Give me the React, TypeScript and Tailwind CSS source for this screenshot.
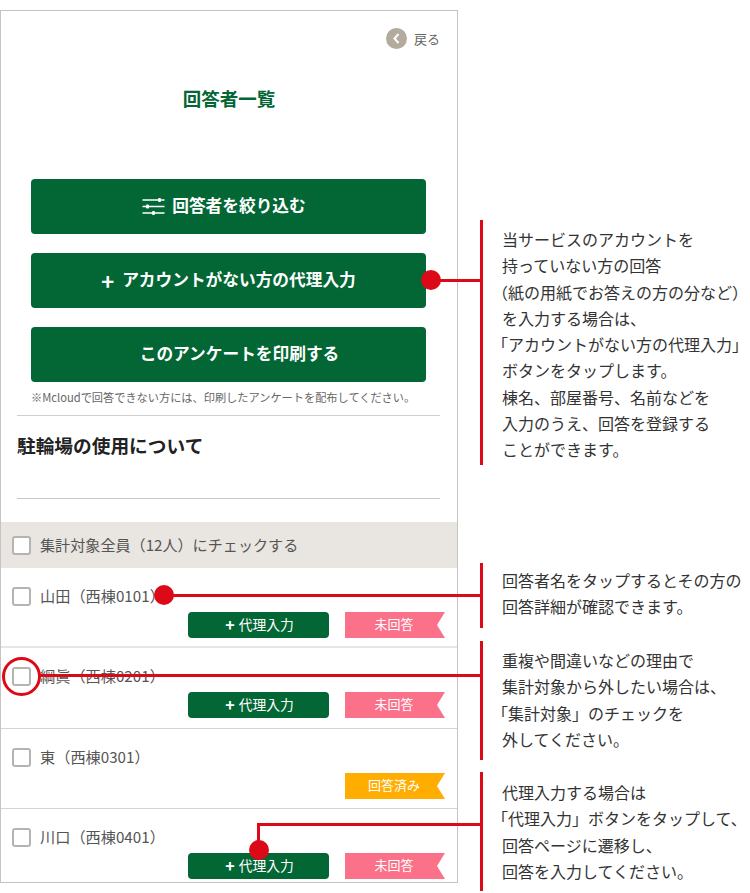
const Checkbox = () => (
  <span className="block w-[19px] h-[19px] shrink-0 rounded-[3px] border-2 border-[#b4b4b4] bg-white" />
);

const ProxyButton = () => (
  <button className="w-[141px] h-[26px] rounded-[4px] bg-[#036635] text-white text-[13.8px] flex items-center justify-center gap-[4px] pb-[2px] pl-[2px]">
    <span className="font-bold text-[16px] leading-none">+</span>
    <span>代理入力</span>
  </button>
);

const Tag = ({ label, color }: { label: string; color: string }) => (
  <span
    className={`w-[100px] h-[26px] flex items-center justify-center text-white text-[13px] pr-[2px] pb-[2px] [clip-path:polygon(0_0,100%_0,92%_50%,100%_100%,0_100%)] ${color}`}
  >
    {label}
  </span>
);

const Row = ({
  name,
  tag,
  color,
  proxy = true,
  height = "h-[80px]",
  border = "border-b border-[#d4d4d4]",
}: {
  name: string;
  tag: string;
  color: string;
  proxy?: boolean;
  height?: string;
  border?: string;
}) => (
  <div className={`pt-[18px] ${height} ${border}`}>
    <div className="flex items-center h-[20px] pl-[11px] gap-[9px] text-[15.2px] text-[#555]">
      <Checkbox />
      <span className="-mt-[2px]">{name}</span>
    </div>
    <div className="mt-[6px] h-[26px] flex justify-end items-center gap-[16px] pr-[12px]">
      {proxy && <ProxyButton />}
      <Tag label={tag} color={color} />
    </div>
  </div>
);

const MainButton = ({ children, className = "" }: { children: React.ReactNode; className?: string }) => (
  <button className={`w-[395px] h-[55px] rounded-[4px] bg-[#036635] text-white font-bold text-[16.7px] flex items-center justify-center pb-[2px] ${className}`}>
    {children}
  </button>
);

const SlidersIcon = () => (
  <svg width="23" height="19" viewBox="0 0 23 19" className="mr-[7px] mt-[2px]">
    <g stroke="#fff" strokeWidth="1.6" fill="none">
      <path d="M0.5 3h22M0.5 9.5h22M0.5 16h22" />
    </g>
    <g fill="#fff">
      <rect x="16" y="1" width="3" height="4" rx="1" />
      <rect x="4" y="7.5" width="3" height="4" rx="1" />
      <rect x="10" y="14" width="3" height="4" rx="1" />
    </g>
  </svg>
);

const Callout = ({
  className,
  lines,
}: {
  className: string;
  lines: { text: string; hang?: boolean }[];
}) => (
  <div className={`border-l-[3px] border-[#dc0a18] pl-[19px] text-[16px] leading-[26.25px] text-[#333] whitespace-nowrap ${className}`}>
    {lines.map((l) => (
      <div key={l.text} className={l.hang ? "-ml-[10px]" : ""}>
        {l.text}
      </div>
    ))}
  </div>
);

export default function App() {
  return (
    <div className="relative w-[750px] h-[893px] overflow-hidden bg-white flex items-start font-['Noto_Sans_CJK_JP','Noto_Sans',sans-serif]">
      <div className="w-[458px] h-[873px] mt-[10px] border border-[#c4c4c4] shrink-0 overflow-hidden">
        <div className="flex justify-end items-center gap-[7px] pr-[17px] pt-[17px] text-[13px] text-[#666]">
          <span className="w-[21px] h-[21px] rounded-full bg-[#b3ab9d] flex items-center justify-center">
            <svg width="9" height="11" viewBox="0 0 9 11" fill="none" stroke="#fff" strokeWidth="2">
              <path d="M6.5 1 2.5 5.5 6.5 10" />
            </svg>
          </span>
          <span>戻る</span>
        </div>
        <h1 className="mt-[36px] text-center text-[18.5px] font-bold text-[#036635] leading-[26px]">回答者一覧</h1>
        <div className="mt-[68px] flex flex-col gap-[19px] items-start pl-[30px]">
          <MainButton className="pr-[9px]">
            <SlidersIcon />
            回答者を絞り込む
          </MainButton>
          <MainButton>
            <span className="mr-[8px] text-[22px] leading-none font-bold">+</span>
            アカウントがない方の代理入力
          </MainButton>
          <MainButton className="pl-[22px]">このアンケートを印刷する</MainButton>
        </div>
        <p className="mt-[7px] pl-[30px] text-[11.2px] leading-[16px] text-[#666] whitespace-nowrap">
          ※Mcloudで回答できない方には、印刷したアンケートを配布してください。
        </p>
        <div className="mt-[10px] ml-[16px] mr-[17px] border-t border-[#d0d0d0] h-[83px]">
          <h2 className="pt-[15px] text-[18.7px] font-bold leading-[28px] text-[#222]">駐輪場の使用について</h2>
        </div>
        <div className="ml-[16px] mr-[17px] border-t border-[#c8c8c8]" />
        <div className="mt-[23px] h-[46px] bg-[#e9e5e0] flex items-center pl-[11px] gap-[9px] text-[15.1px] text-[#555]">
          <Checkbox />
          <span className="-mt-[2px]">集計対象全員（12人）にチェックする</span>
        </div>
        <Row name="山田（西棟0101）" tag="未回答" color="bg-[#fb718a]" border="border-b-2 border-[#e6e6e6]" />
        <Row name="綱眞（西棟0201）" tag="未回答" color="bg-[#fb718a]" height="h-[81px]" />
        <Row name="東（西棟0301）" tag="回答済み" color="bg-[#ffad00]" proxy={false} />
        <Row name="川口（西棟0401）" tag="未回答" color="bg-[#fb718a]" border="" />
      </div>

      <div className="ml-[22px] pt-[220px] flex flex-col">
        <Callout
          className="h-[245px] pt-[6px]"
          lines={[
            { text: "当サービスのアカウントを" },
            { text: "持っていない方の回答" },
            { text: "（紙の用紙でお答えの方の分など）", hang: true },
            { text: "を入力する場合は、" },
            { text: "「アカウントがない方の代理入力」", hang: true },
            { text: "ボタンをタップします。" },
            { text: "棟名、部屋番号、名前などを" },
            { text: "入力のうえ、回答を登録する" },
            { text: "ことができます。" },
          ]}
        />
        <Callout
          className="mt-[98px] h-[65px] pt-[4px]"
          lines={[{ text: "回答者名をタップするとその方の" }, { text: "回答詳細が確認できます。" }]}
        />
        <Callout
          className="mt-[13px] h-[119px] pt-[6px]"
          lines={[
            { text: "重複や間違いなどの理由で" },
            { text: "集計対象から外したい場合は、" },
            { text: "「集計対象」のチェックを", hang: true },
            { text: "外してください。" },
          ]}
        />
        <Callout
          className="mt-[12px] h-[119px] pt-[7px]"
          lines={[
            { text: "代理入力する場合は" },
            { text: "「代理入力」ボタンをタップして、", hang: true },
            { text: "回答ページに遷移し、" },
            { text: "回答を入力してください。" },
          ]}
        />
      </div>

      {/* connectors lying over the panel */}
      <span className="absolute left-[421px] top-[270px] w-[20px] h-[20px] rounded-full bg-[#dc0a18]" />
      <span className="absolute left-[431px] top-[279px] w-[49px] h-[3px] bg-[#dc0a18]" />
      <span className="absolute left-[154px] top-[585px] w-[20px] h-[20px] rounded-full bg-[#dc0a18]" />
      <span className="absolute left-[164px] top-[594px] w-[316px] h-[3px] bg-[#dc0a18]" />
      <span className="absolute left-[2px] top-[657px] w-[39px] h-[39px] rounded-full border-[3px] border-[#dc0a18]" />
      <span className="absolute left-[40px] top-[674px] w-[440px] h-[3px] bg-[#dc0a18]" />
      <span className="absolute left-[249px] top-[840px] w-[20px] h-[20px] rounded-full bg-[#dc0a18]" />
      <span className="absolute left-[257px] top-[823px] w-[3px] h-[20px] bg-[#dc0a18]" />
      <span className="absolute left-[257px] top-[823px] w-[223px] h-[3px] bg-[#dc0a18]" />
    </div>
  );
}
